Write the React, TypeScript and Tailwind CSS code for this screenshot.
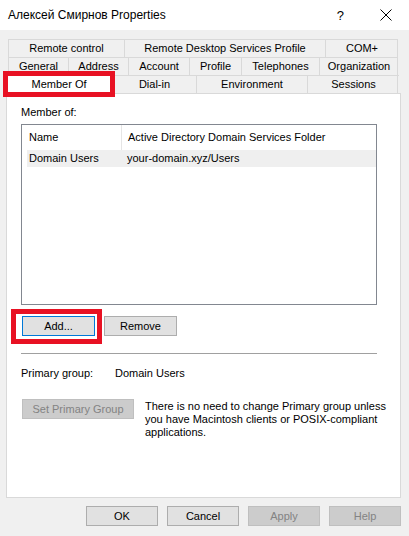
import React from 'react';

/** Вкладка верхних рядов диалога свойств. */
function Tab({ label, w }: { label: string; w: number }) {
  return (
    <div
      className="flex h-full shrink-0 items-center justify-center border-l border-t border-[#d9d9d9]"
      style={{ width: w }}
    >
      {label}
    </div>
  );
}

function Btn({
  children,
  disabled,
  focused,
  className = '',
}: {
  children: React.ReactNode;
  disabled?: boolean;
  focused?: boolean;
  className?: string;
}) {
  const tone = disabled
    ? 'border-[#bfbfbf] bg-[#cccccc] text-[#838383]'
    : focused
      ? 'border-[#0078d7] bg-[#e1e1e1] text-black'
      : 'border-[#adadad] bg-[#e1e1e1] text-black';
  return (
    <div className={`flex items-center justify-center border ${tone} ${className}`}>{children}</div>
  );
}

export default function App() {
  const row1 = [
    { label: 'Remote control', w: 116 },
    { label: 'Remote Desktop Services Profile', w: 201 },
    { label: 'COM+', w: 73 },
  ];
  const row2 = [
    { label: 'General', w: 60 },
    { label: 'Address', w: 60 },
    { label: 'Account', w: 61 },
    { label: 'Profile', w: 52 },
    { label: 'Telephones', w: 78 },
    { label: 'Organization', w: 79 },
  ];
  const row3 = [
    { label: 'Dial-in', w: 84 },
    { label: 'Environment', w: 111 },
    { label: 'Sessions', w: 92 },
  ];

  return (
    <div className="flex h-[536px] w-[409px] flex-col overflow-hidden bg-[#f0f0f0] font-['Liberation_Sans',Arial,sans-serif] text-[11px] leading-[13px] text-black">
      {/* заголовок окна */}
      <div className="flex h-[30px] shrink-0 items-center bg-white pl-[8px]">
        <span className="text-[12px]">Алексей Смирнов Properties</span>
        <span className="ml-auto mr-[36px] text-[13px]">?</span>
        <svg width="12" height="12" viewBox="0 0 12 12" className="mr-[17px]">
          <path d="M0.5 0.5 L11.5 11.5 M11.5 0.5 L0.5 11.5" stroke="#000" strokeWidth="1" />
        </svg>
      </div>

      {/* вкладки */}
      <div className="ml-[8px] mt-[9px] flex w-[390px] flex-col">
        <div className="flex h-[18px] border-r border-[#d9d9d9]">
          {row1.map((t) => (
            <Tab key={t.label} {...t} />
          ))}
        </div>
        <div className="flex h-[18px] border-r border-[#d9d9d9]">
          {row2.map((t) => (
            <Tab key={t.label} {...t} />
          ))}
        </div>
        <div className="relative z-10 flex h-[18px] border-r border-[#d9d9d9]">
          <div className="relative -ml-[2px] -mt-[2px] flex h-[21px] w-[106px] shrink-0 items-center justify-center border-l border-r border-t border-[#d9d9d9] bg-white">
            Member Of
            <div className="absolute -left-[4px] -top-[3px] h-[26px] w-[112px] border-[5px] border-[#e81123]" />
          </div>
          {row3.map((t) => (
            <Tab key={t.label} {...t} />
          ))}
        </div>
      </div>

      {/* панель вкладки */}
      <div className="ml-[6px] flex h-[405px] w-[395px] flex-col border border-[#d9d9d9] bg-white pl-[14px]">
        <div className="mt-[12px]">Member of:</div>
        <div className="mt-[5px] flex h-[181px] w-[356px] flex-col border border-[#828790]">
          <div className="flex h-[25px] shrink-0 items-center">
            <div className="flex h-full w-[100px] items-center border-r border-[#e5e5e5] pl-[7px]">Name</div>
            <div className="pl-[6px]">Active Directory Domain Services Folder</div>
          </div>
          <div className="ml-[5px] flex h-[17px] items-center bg-[#efefef]">
            <div className="w-[100px] pl-[2px]">Domain Users</div>
            <div>your-domain.xyz/Users</div>
          </div>
        </div>

        <div className="mt-[11px] flex gap-[9px] pl-[1px]">
          <div className="relative">
            <Btn focused className="h-[20px] w-[73px]">Add...</Btn>
            <div className="absolute -left-[11px] -top-[7px] h-[35px] w-[91px] border-[5px] border-[#e81123]" />
          </div>
          <Btn className="h-[20px] w-[73px]">Remove</Btn>
        </div>

        <div className="mt-[17px] h-[2px] w-[356px] border-t border-[#a0a0a0] border-b border-b-white" />

        <div className="mt-[12px] flex">
          <span className="w-[94px]">Primary group:</span>
          <span>Domain Users</span>
        </div>

        <div className="mt-[20px] flex items-start">
          <Btn disabled className="ml-[1px] mt-[-1px] h-[20px] w-[112px]">Set Primary Group</Btn>
          <p className="ml-[11px] w-[246px] leading-[13px]">
            There is no need to change Primary group unless you have Macintosh clients or POSIX-compliant applications.
          </p>
        </div>
      </div>

      {/* кнопки диалога */}
      <div className="ml-[86px] mt-[8px] flex gap-[9px]">
        <Btn className="h-[20px] w-[72px]">OK</Btn>
        <Btn className="h-[20px] w-[72px]">Cancel</Btn>
        <Btn disabled className="h-[20px] w-[72px]">Apply</Btn>
        <Btn disabled className="h-[20px] w-[72px]">Help</Btn>
      </div>
    </div>
  );
}
